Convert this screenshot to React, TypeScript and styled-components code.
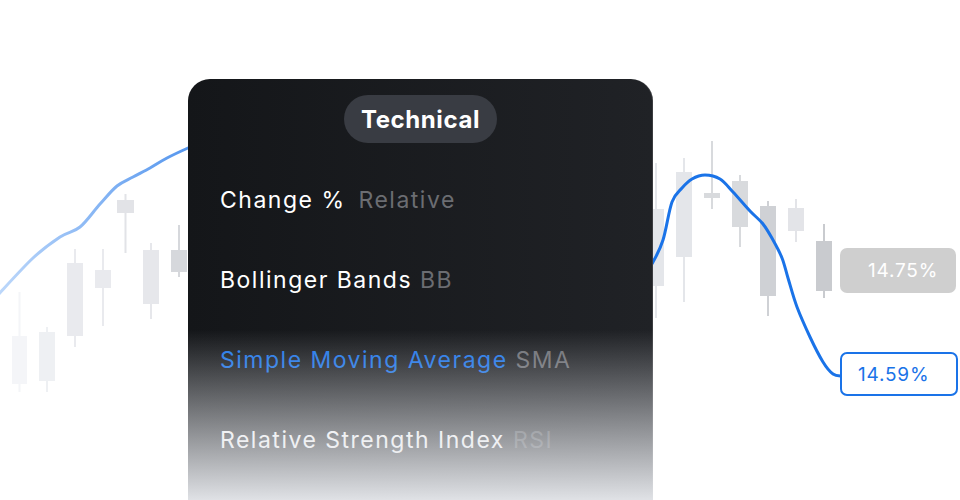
import React from "react";
import styled, { createGlobalStyle } from "styled-components";

const Global = createGlobalStyle`
  html, body { margin: 0; padding: 0; background: #ffffff; }
  body { font-family: Inter, "Open Sans", sans-serif; }
`;

const Stage = styled.div`
  position: relative;
  width: 960px;
  height: 500px;
  overflow: hidden;
  background: #ffffff;
  display: flex;
  flex-direction: column;
`;

const ChartLayer = styled.svg`
  position: absolute;
  inset: 0;
  width: 960px;
  height: 500px;
`;

const Panel = styled.section`
  position: relative;
  margin: 79px 0 0 188px;
  width: 465px;
  height: 421px;
  border-radius: 22px 22px 0 0;
  background: linear-gradient(90deg, #141619 0%, #202226 100%);
  box-shadow: inset -1px 0 0 rgba(255, 255, 255, 0.12);
  display: flex;
  flex-direction: column;
  align-items: stretch;
  padding-top: 16px;
  box-sizing: border-box;
  overflow: hidden;

  &::after {
    content: "";
    position: absolute;
    left: 0;
    right: 0;
    top: 251px;
    bottom: 0;
    pointer-events: none;
    background: linear-gradient(
      180deg,
      rgba(230, 232, 236, 0) 0%,
      rgba(230, 232, 236, 0.97) 100%
    );
  }
`;

const Pill = styled.div`
  align-self: center;
  height: 48px;
  padding: 0 17px;
  border-radius: 24px;
  background: #393c43;
  color: #ffffff;
  font-weight: 700;
  font-size: 24px;
  letter-spacing: 0.6px;
  display: flex;
  align-items: center;
  box-sizing: border-box;
`;

const List = styled.ul`
  list-style: none;
  margin: 17px 0 0;
  padding: 0 0 0 32px;
  display: flex;
  flex-direction: column;
`;

const Row = styled.li<{ $gap?: number }>`
  height: 80px;
  display: flex;
  align-items: center;
  gap: ${(p) => p.$gap ?? 8}px;
  font-size: 23px;
  letter-spacing: 1.5px;
  white-space: nowrap;
`;

const Name = styled.span<{ $tone: "white" | "blue" }>`
  color: ${(p) => (p.$tone === "blue" ? "#1a73e8" : "#ffffff")};
`;

const Abbr = styled.span<{ $faint?: boolean }>`
  color: ${(p) => (p.$faint ? "#4a4d52" : "#6b6d72")};
`;

const Tag = styled.div<{ $top: number; $variant: "gray" | "blue" }>`
  position: absolute;
  left: 840px;
  top: ${(p) => p.$top}px;
  width: ${(p) => (p.$variant === "gray" ? 116 : 118)}px;
  height: ${(p) => (p.$variant === "gray" ? 45 : 44)}px;
  box-sizing: border-box;
  border-radius: 7px;
  display: flex;
  align-items: center;
  padding-left: ${(p) => (p.$variant === "gray" ? 28 : 16)}px;
  font-size: 19px;
  letter-spacing: 0.8px;
  background: ${(p) => (p.$variant === "gray" ? "#cfcfcf" : "#ffffff")};
  color: ${(p) => (p.$variant === "gray" ? "#ffffff" : "#1a73e8")};
  border: ${(p) => (p.$variant === "blue" ? "2.5px solid #1a73e8" : "none")};
`;

type Candle = { x: number; w: number; bt: number; bb: number; wt: number; wb: number; c: string };

const candles: Candle[] = [
  { x: 12, w: 15, bt: 336, bb: 384, wt: 292, wb: 392, c: "#f4f5f8" },
  { x: 39, w: 16, bt: 332, bb: 381, wt: 327, wb: 392, c: "#eef0f3" },
  { x: 67, w: 16, bt: 263, bb: 336, wt: 249, wb: 347, c: "#e9eaee" },
  { x: 95, w: 16, bt: 270, bb: 288, wt: 249, wb: 326, c: "#e9eaee" },
  { x: 117, w: 17, bt: 200, bb: 213, wt: 194, wb: 253, c: "#e2e3e7" },
  { x: 143, w: 16, bt: 250, bb: 304, wt: 243, wb: 319, c: "#e6e7eb" },
  { x: 171, w: 16, bt: 250, bb: 272, wt: 225, wb: 277, c: "#d6d8dc" },
  { x: 648, w: 16, bt: 209, bb: 286, wt: 163, wb: 318, c: "#e4e6ea" },
  { x: 676, w: 16, bt: 172, bb: 257, wt: 158, wb: 302, c: "#e4e6ea" },
  { x: 704, w: 16, bt: 193, bb: 198, wt: 141, wb: 209, c: "#d8dadd" },
  { x: 732, w: 16, bt: 181, bb: 227, wt: 175, wb: 247, c: "#d8dadd" },
  { x: 760, w: 16, bt: 206, bb: 296, wt: 201, wb: 316, c: "#cfd1d5" },
  { x: 788, w: 16, bt: 208, bb: 231, wt: 199, wb: 242, c: "#e3e4e8" },
  { x: 816, w: 16, bt: 241, bb: 291, wt: 224, wb: 298, c: "#c9cbcf" },
];

const smooth = (pts: [number, number][]) => {
  let d = `M${pts[0][0]},${pts[0][1]}`;
  for (let i = 0; i < pts.length - 1; i++) {
    const p0 = pts[i - 1] || pts[i];
    const p1 = pts[i];
    const p2 = pts[i + 1];
    const p3 = pts[i + 2] || p2;
    const c1x = p1[0] + (p2[0] - p0[0]) / 6;
    const c1y = p1[1] + (p2[1] - p0[1]) / 6;
    const c2x = p2[0] - (p3[0] - p1[0]) / 6;
    const c2y = p2[1] - (p3[1] - p1[1]) / 6;
    d += ` C${c1x.toFixed(1)},${c1y.toFixed(1)} ${c2x.toFixed(1)},${c2y.toFixed(1)} ${p2[0]},${p2[1]}`;
  }
  return d;
};

const leftLine = smooth([
  [-4, 297],
  [33, 258],
  [60, 237],
  [80, 227],
  [100, 204],
  [117, 186],
  [133, 177],
  [150, 168],
  [167, 158],
  [188, 148],
  [230, 130],
]);

const rightLine = smooth([
  [630, 300],
  [653, 262],
  [663, 240],
  [672, 202],
  [682, 188],
  [692, 179],
  [705, 175],
  [720, 179],
  [733, 192],
  [750, 211],
  [763, 224],
  [773, 240],
  [782, 258],
  [788, 278],
  [797, 307],
  [810, 337],
  [823, 362],
  [833, 374],
  [842, 376],
]);

const rows = [
  { name: "Change %", abbr: "Relative", tone: "white" as const, gap: 13 },
  { name: "Bollinger Bands", abbr: "BB", tone: "white" as const },
  { name: "Simple Moving Average", abbr: "SMA", tone: "blue" as const },
  { name: "Relative Strength Index", abbr: "RSI", tone: "white" as const, faint: true },
];

export default function App() {
  return (
    <>
      <Global />
      <Stage>
        <ChartLayer viewBox="0 0 960 500">
          <defs>
            <linearGradient id="leftStroke" x1="0" y1="0" x2="190" y2="0" gradientUnits="userSpaceOnUse">
              <stop offset="0" stopColor="#bcd7fa" />
              <stop offset="1" stopColor="#5596ee" />
            </linearGradient>
          </defs>
          {candles.map((c, i) => (
            <g key={i} fill={c.c}>
              <rect x={c.x + c.w / 2 - 1} y={c.wt} width={2} height={c.wb - c.wt} />
              <rect x={c.x} y={c.bt} width={c.w} height={c.bb - c.bt} />
            </g>
          ))}
          <path d={leftLine} fill="none" stroke="url(#leftStroke)" strokeWidth={3} strokeLinecap="round" />
          <path d={rightLine} fill="none" stroke="#1a73e8" strokeWidth={3} strokeLinecap="round" />
        </ChartLayer>
        <Panel>
          <Pill>Technical</Pill>
          <List>
            {rows.map((r) => (
              <Row key={r.name} $gap={r.gap}>
                <Name $tone={r.tone}>{r.name}</Name>
                <Abbr $faint={r.faint}>{r.abbr}</Abbr>
              </Row>
            ))}
          </List>
        </Panel>
        <Tag $top={248} $variant="gray">14.75%</Tag>
        <Tag $top={352} $variant="blue">14.59%</Tag>
      </Stage>
    </>
  );
}
